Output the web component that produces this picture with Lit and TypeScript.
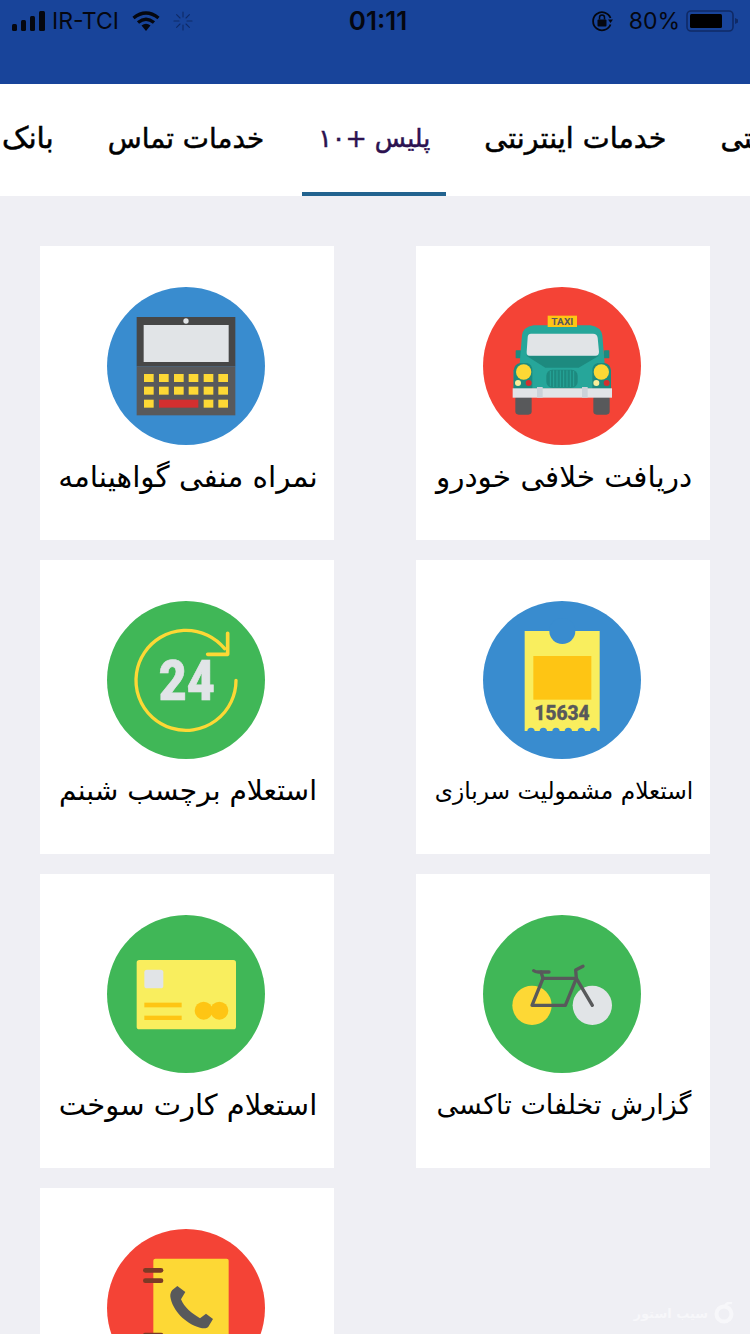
import { LitElement, html, css, svg } from "lit";
import { customElement } from "lit/decorators.js";

const DARK = "#58595b";
const LIGHT = "#e1e4e7";
const YEL = "#fdd835";
const PALE = "#f9ee5e";
const AMB = "#fec514";
const RED = "#f44336";
const BLUE = "#398ccf";
const GREEN = "#40b757";

const icon = (vx: number, vy: number, fill: string, body: unknown) => html`
  <svg class="icon" viewBox="${vx} ${vy} 474 474">
    <circle cx="${vx + 237}" cy="${vy + 237}" r="237" fill="${fill}"></circle>
    ${body}
  </svg>`;

const taxi = icon(38, 20, RED, svg`
  <rect x="135" y="345" width="49" height="58" rx="10" fill="${DARK}"/>
  <rect x="369" y="345" width="49" height="58" rx="10" fill="${DARK}"/>
  <rect x="136" y="210" width="16" height="24" rx="2" fill="#1d8a7f"/>
  <rect x="401" y="210" width="16" height="24" rx="2" fill="#1d8a7f"/>
  <path d="M148 250 L155 165 Q158 140 190 135 L360 135 Q392 140 396 165 L403 250 L422 270 V325 H130 V270 Z" fill="#26a69a"/>
  <path d="M130 325 V270 Q132 250 150 248 H170 Q186 252 186 270 V325 Z" fill="#1d8a7f"/>
  <path d="M422 325 V270 Q420 250 402 248 H382 Q366 252 366 270 V325 Z" fill="#1d8a7f"/>
  <path d="M168 226 H386 L325 262 H225 Z" fill="#1d8a7f"/>
  <path d="M182 160 H368 Q380 160 382 172 L386 214 Q386 226 375 226 H178 Q168 226 169 214 L172 172 Q172 160 182 160 Z" fill="${LIGHT}"/>
  <rect x="228" y="268" width="94" height="54" rx="18" fill="#1d8a7f"/>
  <path d="M240 272 V318 M250 270 V320 M260 270 V320 M270 270 V320 M280 270 V320 M290 270 V320 M300 270 V320 M310 272 V318" stroke="#26a69a" stroke-width="3"/>
  <circle cx="160" cy="275" r="23" fill="${YEL}"/>
  <circle cx="393" cy="275" r="23" fill="${YEL}"/>
  <circle cx="143" cy="308" r="9" fill="#f9ee9a"/>
  <circle cx="175" cy="308" r="9" fill="#d32f2f"/>
  <circle cx="378" cy="308" r="9" fill="#f9ee9a"/>
  <circle cx="409" cy="308" r="9" fill="#d32f2f"/>
  <rect x="127" y="324" width="298" height="28" fill="${LIGHT}"/>
  <rect x="200" y="320" width="17" height="32" fill="#cbd2d9"/>
  <rect x="335" y="320" width="17" height="32" fill="#cbd2d9"/>
  <rect x="232" y="106" width="88" height="34" fill="${AMB}"/>
  <text x="276" y="133" text-anchor="middle" font-family="Roboto, sans-serif" font-weight="700" font-size="28" textLength="66" lengthAdjust="spacingAndGlyphs" fill="${DARK}">TAXI</text>
`);

const keyX = [147, 192, 237, 281, 326, 370];
const keys = keyX.flatMap((x, i) => [
  svg`<rect x="${x}" y="281" width="29" height="24" fill="${YEL}"/>`,
  svg`<rect x="${x}" y="319" width="29" height="24" fill="${YEL}"/>`,
  i === 0 || i > 3 ? svg`<rect x="${x}" y="358" width="29" height="24" fill="${YEL}"/>` : svg``,
]);

const calc = icon(36, 20, BLUE, svg`
  <rect x="125" y="110" width="296" height="148" fill="#474747"/>
  <rect x="125" y="258" width="296" height="147" fill="${DARK}"/>
  <rect x="146" y="134" width="255" height="111" fill="${LIGHT}"/>
  <circle cx="273" cy="122" r="8" fill="${LIGHT}"/>
  ${keys}
  <rect x="192" y="358" width="118" height="24" fill="#d32f2f"/>
`);

const arches = [182, 219, 257, 294, 333, 370].map(
  (x) => svg`<circle cx="${x}" cy="406" r="11" fill="${BLUE}"/>`
);

const ticket = icon(38, 15, BLUE, svg`
  <rect x="163" y="105" width="225" height="300" fill="${PALE}"/>
  ${arches}
  <circle cx="276" cy="105" r="39" fill="${BLUE}"/>
  <rect x="189" y="180" width="174" height="131" fill="${AMB}"/>
  <text x="275" y="372" text-anchor="middle" font-family="Roboto, sans-serif" font-weight="900" font-size="58" textLength="166" lengthAdjust="spacingAndGlyphs" fill="${DARK}" stroke="${DARK}" stroke-width="0.8">15634</text>
`);

const day = icon(35, 15, GREEN, svg`
  <path d="M422 253 A150 150 0 1 1 388 158" fill="none" stroke="${YEL}" stroke-width="10" stroke-linecap="round"/>
  <path d="M397 112 V175 H337" fill="none" stroke="${YEL}" stroke-width="11" stroke-linecap="round" stroke-linejoin="round"/>
  <text x="274" y="313" text-anchor="middle" font-family="Roboto, sans-serif" font-weight="900" font-size="166" textLength="168" lengthAdjust="spacingAndGlyphs" fill="${LIGHT}" stroke="${LIGHT}" stroke-width="2">24</text>
`);

const bike = icon(38, 13, GREEN, svg`
  <circle cx="185" cy="284" r="59" fill="${YEL}"/>
  <circle cx="366" cy="284" r="59" fill="${LIGHT}"/>
  <g fill="none" stroke="${DARK}" stroke-width="10" stroke-linecap="round" stroke-linejoin="round">
    <path d="M185 284 L218 203 H318 L285 284 Z"/>
    <path d="M318 203 L366 284"/>
    <path d="M318 203 L316 178 L338 167"/>
    <path d="M218 203 L212 184"/>
    <path d="M190 180 Q194 184 204 184 H236"/>
  </g>
`);

const fuel = icon(35, 13, GREEN, svg`
  <rect x="124" y="148" width="298" height="208" rx="8" fill="${PALE}"/>
  <rect x="147" y="177" width="57" height="56" rx="8" fill="${LIGHT}"/>
  <rect x="147" y="276" width="112" height="14" fill="${AMB}"/>
  <rect x="147" y="315" width="112" height="13" fill="${AMB}"/>
  <circle cx="325" cy="300" r="27" fill="${AMB}"/>
  <circle cx="372" cy="300" r="27" fill="${AMB}"/>
`);

const book = icon(36, 27, RED, svg`
  <rect x="175" y="116" width="226" height="298" rx="6" fill="${YEL}"/>
  ${[151, 182, 345, 376].map(
    (y) => svg`<rect x="144" y="${y - 7}" width="61" height="14" rx="7" fill="#7b3a26"/>`
  )}
  <path d="M247 198 L271 216 L258 238 C268 262 290 280 315 295 L333 281 L354 297 L340 320 C335 326 325 326 315 323 C270 310 232 270 226 230 C225 222 228 215 232 210 Z" fill="${DARK}"/>
`);

const items = [
  { label: "دریافت خلافی خودرو", art: taxi, size: 29.5 },
  { label: "نمراه منفی گواهینامه", art: calc, size: 29.5 },
  { label: "استعلام مشمولیت سربازی", art: ticket, size: 23.3 },
  { label: "استعلام برچسب شبنم", art: day, size: 28.1 },
  { label: "گزارش تخلفات تاکسی", art: bike, size: 27 },
  { label: "استعلام کارت سوخت", art: fuel, size: 29 },
  { label: "دفترچه تلفن", art: book, size: 29.5, last: true },
];

const tabs = [
  { t: "خدمات پرداختی", size: 28.2 },
  { t: "خدمات اینترنتی", size: 28.6 },
  { t: "پلیس +۱۰", size: 25.4, on: true },
  { t: "خدمات تماس", size: 27.8 },
  { t: "بانک", size: 29.5 },
];

@customElement("app-root")
export class AppRoot extends LitElement {
  static styles = css`
    :host {
      display: block;
      position: relative;
      width: 750px;
      height: 1334px;
      overflow: hidden;
      background: #efeff4;
      font-family: "DejaVu Sans", sans-serif;
    }
    .top {
      height: 84px;
      background: #18449a;
      box-sizing: border-box;
      padding: 5px 12px 0;
    }
    .status {
      display: grid;
      grid-template-columns: 1fr auto 1fr;
      align-items: center;
      height: 26px;
      font-family: Inter, sans-serif;
      font-size: 23px;
      color: #05070f;
    }
    .left, .right { display: flex; align-items: center; }
    .right { justify-content: flex-end; }
    .carrier { margin: 0 13px 0 7px; }
    .spin { margin-left: 13px; }
    .time { font-weight: 600; font-size: 26px; margin-left: 6px; }
    .pct { margin: 0 6px 0 16px; }
    .tabwrap {
      height: 112px;
      background: #fff;
      overflow: hidden;
      direction: rtl;
    }
    .tabs {
      display: flex;
      height: 112px;
      margin-right: -171px;
      gap: 22px;
    }
    .tab {
      flex: none;
      box-sizing: border-box;
      height: 112px;
      padding: 0 16px;
      display: flex;
      align-items: center;
      -webkit-text-stroke: 0.5px #000;
      color: #000;
      white-space: nowrap;
      border-bottom: 4px solid transparent;
    }
    .tab.on {
      color: #2c1250;
      -webkit-text-stroke: 0.5px #2c1250;
      border-bottom-color: #22638f;
    }
    .grid {
      direction: rtl;
      display: grid;
      grid-template-columns: 294px 294px;
      justify-content: space-between;
      row-gap: 20px;
      padding: 50px 40px 0;
    }
    .card {
      height: 294px;
      background: #fff;
      display: flex;
      flex-direction: column;
      align-items: center;
      padding-top: 41px;
      box-sizing: border-box;
    }
    .card.last { grid-column: 2; }
    .icon { width: 158px; height: 158px; display: block; flex: none; margin-right: 2px; }
    .label {
      margin-top: 14px;
      padding-left: 2px;
      line-height: 36px;
      color: #000;
      white-space: nowrap;
    }
    .mark {
      position: absolute;
      right: 16px;
      bottom: 10px;
      display: flex;
      align-items: center;
      gap: 6px;
      color: #f7f7fa;
      font-weight: 700;
      font-size: 13px;
      direction: rtl;
    }
  `;

  render() {
    return html`
      <div class="top">
        <div class="status">
          <div class="left">
            <svg width="33" height="20" viewBox="0 0 33 20">
              <rect x="0" y="13" width="5" height="7" rx="1.5" fill="#05070f"></rect>
              <rect x="9" y="9" width="5" height="11" rx="1.5" fill="#05070f"></rect>
              <rect x="18" y="5" width="5" height="15" rx="1.5" fill="#05070f"></rect>
              <rect x="27" y="0" width="6" height="20" rx="1.5" fill="#05070f"></rect>
            </svg>
            <span class="carrier">IR-TCI</span>
            <svg width="28" height="20" viewBox="0 0 28 20">
              <path d="M1.5 7 Q14 -3 26.5 7" fill="none" stroke="#05070f" stroke-width="3.4"></path>
              <path d="M6 11.5 Q14 5 22 11.5" fill="none" stroke="#05070f" stroke-width="3.4"></path>
              <path d="M9.5 14.5 Q14 11 18.5 14.5 L14 20 Z" fill="#05070f"></path>
            </svg>
            <svg class="spin" width="20" height="20" viewBox="0 0 20 20" stroke="#0f2a66" stroke-width="1.1" stroke-linecap="round">
              <path d="M10 1V6M10 14V19M1 10H6M14 10H19M3.6 3.6L7 7M13 13L16.4 16.4M3.6 16.4L7 13M13 7L16.4 3.6"></path>
            </svg>
          </div>
          <div class="time">01:11</div>
          <div class="right">
            <svg width="22" height="22" viewBox="0 0 22 22">
              <path d="M19.5 8 A9 9 0 1 0 19.5 14.5" fill="none" stroke="#05070f" stroke-width="1.8"></path>
              <path d="M17 9.5 H22 L19.5 13 Z" fill="#05070f"></path>
              <rect x="6.5" y="9.5" width="9" height="7" rx="1" fill="#05070f"></rect>
              <path d="M8.5 9.5 V7.5 A2.5 2.5 0 0 1 13.5 7.5 V9.5" fill="none" stroke="#05070f" stroke-width="1.5"></path>
            </svg>
            <span class="pct">80%</span>
            <svg width="52" height="22" viewBox="0 0 52 22">
              <rect x="1" y="1" width="46" height="20" rx="4" fill="none" stroke="#0f2a66" stroke-width="1.6"></rect>
              <rect x="4" y="4" width="32" height="14" rx="1.5" fill="#000"></rect>
              <path d="M49 8 L52 9.5 V12.5 L49 14 Z" fill="#0f2a66"></path>
            </svg>
          </div>
        </div>
      </div>
      <div class="tabwrap">
        <div class="tabs">
          ${tabs.map(
            (t) => html`<div class="tab ${t.on ? "on" : ""}" style="font-size:${t.size}px">${t.t}</div>`
          )}
        </div>
      </div>
      <div class="grid">
        ${items.map(
          (it) => html`<div class="card ${it.last ? "last" : ""}">
            ${it.art}
            <div class="label" style="font-size:${it.size}px">${it.label}</div>
          </div>`
        )}
      </div>
      <div class="mark">
        <svg width="20" height="22" viewBox="0 0 20 22">
          <circle cx="10" cy="12" r="7.5" fill="none" stroke="#f7f7fa" stroke-width="4"></circle>
          <path d="M11 4 Q13 0 18 1" fill="none" stroke="#f7f7fa" stroke-width="2.5"></path>
        </svg>
        <span>سیب استور</span>
      </div>
    `;
  }
}
